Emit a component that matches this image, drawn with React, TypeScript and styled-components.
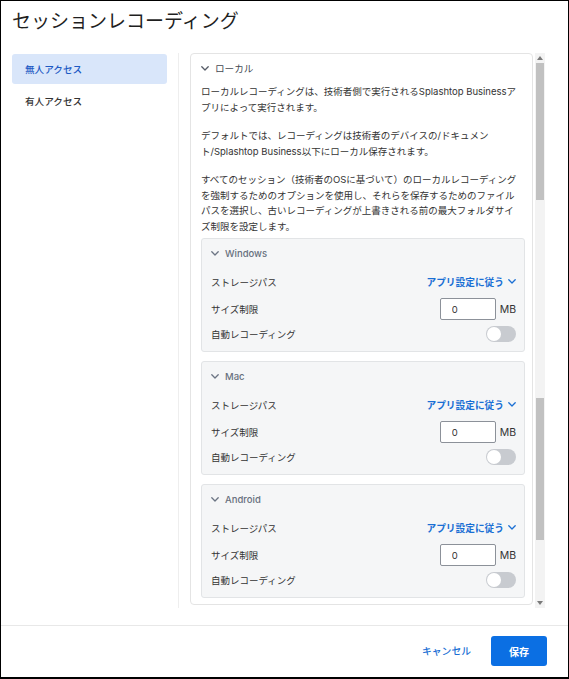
import styled, { createGlobalStyle } from 'styled-components';

const GlobalStyle = createGlobalStyle`
  * { box-sizing: border-box; }
  body {
    margin: 0;
    background: #ffffff;
    font-family: 'Inter', 'Noto Sans CJK JP', sans-serif;
  }
`;

const platforms = ['Windows', 'Mac', 'Android'];

function Chevron({ color = '#6b7280' }: { color?: string }) {
  return (
    <svg width="8" height="5" viewBox="0 0 8 5">
      <polyline
        points="0.8,0.8 4,4 7.2,0.8"
        fill="none"
        stroke={color}
        strokeWidth="1.3"
        strokeLinecap="round"
        strokeLinejoin="round"
      />
    </svg>
  );
}

function Arrow({ up }: { up?: boolean }) {
  return (
    <svg width="6" height="4" viewBox="0 0 6 4">
      <polygon points={up ? '0,4 3,0 6,4' : '0,0 3,4 6,0'} fill="#7a7a7a" />
    </svg>
  );
}

function PlatformCard({ name }: { name: string }) {
  return (
    <SubCard>
      <SubHeader>
        <Chevron color="#6b7483" />
        <span>{name}</span>
      </SubHeader>
      <Row $h={24} $mb={2}>
        <Label>ストレージパス</Label>
        <SelectLink>
          アプリ設定に従う
          <Chevron color="#1a6fd4" />
        </SelectLink>
      </Row>
      <Row $h={28}>
        <Label>サイズ制限</Label>
        <SizeGroup>
          <SizeInput defaultValue="0" />
          <Unit>MB</Unit>
        </SizeGroup>
      </Row>
      <Row $h={22}>
        <Label>自動レコーディング</Label>
        <Toggle>
          <Knob />
        </Toggle>
      </Row>
    </SubCard>
  );
}

export default function App() {
  return (
    <>
      <GlobalStyle />
      <Dialog>
        <Title>セッションレコーディング</Title>
        <Body>
          <Nav>
            <NavItem $active>無人アクセス</NavItem>
            <NavItem>有人アクセス</NavItem>
          </Nav>
          <Divider />
          <ScrollArea>
            <Card>
              <SectionHeader>
                <Chevron color="#555b66" />
                <span>ローカル</span>
              </SectionHeader>
              <Para>
                ローカルレコーディングは、技術者側で実行されるSplashtop Businessア
                <br />
                プリによって実行されます。
              </Para>
              <Para>
                デフォルトでは、レコーディングは技術者のデバイスの/ドキュメン
                <br />
                ト/Splashtop Business以下にローカル保存されます。
              </Para>
              <Para>
                すべてのセッション（技術者のOSに基づいて）のローカルレコーディング
                <br />
                を強制するためのオプションを使用し、それらを保存するためのファイル
                <br />
                パスを選択し、古いレコーディングが上書きされる前の最大フォルダサイ
                <br />
                ズ制限を設定します。
              </Para>
              <CardList>
                {platforms.map((p) => (
                  <PlatformCard key={p} name={p} />
                ))}
              </CardList>
            </Card>
            <ScrollTrack>
              <ArrowBox>
                <Arrow up />
              </ArrowBox>
              <Thumb $h={137} />
              <Thumb $h={142} $mt={198} />
              <TrackFill />
              <ArrowBox>
                <Arrow />
              </ArrowBox>
            </ScrollTrack>
          </ScrollArea>
        </Body>
        <Footer>
          <CancelButton>キャンセル</CancelButton>
          <SaveButton>保存</SaveButton>
        </Footer>
      </Dialog>
    </>
  );
}

const Dialog = styled.div`
  width: 569px;
  height: 679px;
  border: 1px solid #000000;
  border-bottom-width: 2px;
  background: #ffffff;
  display: flex;
  flex-direction: column;
  overflow: hidden;
`;

const Title = styled.h1`
  margin: 0;
  padding: 9px 11px 19px;
  font-size: 19px;
  line-height: 24px;
  font-weight: 400;
  color: #1f1f1f;
  white-space: nowrap;
`;

const Body = styled.div`
  display: flex;
  height: 555px;
  padding-left: 11px;
  margin-bottom: 17px;
`;

const Nav = styled.nav`
  width: 155px;
  display: flex;
  flex-direction: column;
  gap: 2px;
  padding-top: 1px;
`;

const NavItem = styled.div<{ $active?: boolean }>`
  height: 30px;
  display: flex;
  align-items: center;
  padding-left: 13px;
  border-radius: 3px;
  font-size: 9.6px;
  font-weight: 500;
  color: ${(p) => (p.$active ? '#1d5ac4' : '#333333')};
  background: ${(p) => (p.$active ? '#d9e6fa' : 'transparent')};
`;

const Divider = styled.div`
  width: 1px;
  background: #eeeeee;
  margin: 0 11px;
`;

const ScrollArea = styled.div`
  display: flex;
  gap: 2px;
  height: 100%;
`;

const Card = styled.section`
  width: 343px;
  height: 552px;
  border: 1px solid #e4e4e4;
  border-radius: 4px;
  padding: 6px 7px 6px 10px;
  overflow: hidden;
`;

const SectionHeader = styled.div`
  height: 16px;
  display: flex;
  align-items: center;
  gap: 6px;
  font-size: 9.6px;
  color: #444a52;
  margin-bottom: 8px;
`;

const Para = styled.p`
  margin: 0 0 13px;
  font-size: 9.5px;
  line-height: 15.5px;
  color: #333333;
  white-space: nowrap;
  &:last-of-type {
    margin-bottom: 4px;
  }
`;

const CardList = styled.div`
  display: flex;
  flex-direction: column;
  gap: 9px;
`;

const SubCard = styled.div`
  height: 114px;
  background: #f5f6f7;
  border: 1px solid #e2e4e6;
  border-radius: 3px;
  padding: 7px 8px 6px 9px;
  display: flex;
  flex-direction: column;
`;

const SubHeader = styled.div`
  height: 16px;
  display: flex;
  align-items: center;
  gap: 6px;
  font-size: 9.5px;
  font-weight: 500;
  color: #67707d;
  margin-bottom: 8px;
`;

const Row = styled.div<{ $h: number; $mb?: number }>`
  height: ${(p) => p.$h}px;
  margin-bottom: ${(p) => p.$mb ?? 0}px;
  display: flex;
  align-items: center;
  justify-content: space-between;
`;

const Label = styled.span`
  font-size: 9.5px;
  color: #333333;
`;

const SelectLink = styled.span`
  display: flex;
  align-items: center;
  gap: 4px;
  font-size: 9.7px;
  font-weight: 600;
  color: #1a6fd4;
`;

const SizeGroup = styled.div`
  display: flex;
  align-items: center;
  gap: 4px;
`;

const SizeInput = styled.input`
  width: 56px;
  height: 22px;
  border: 1px solid #8c9199;
  border-radius: 2px;
  padding: 0 0 0 11px;
  font-family: inherit;
  font-size: 9.5px;
  color: #333333;
  background: #ffffff;
  outline: none;
`;

const Unit = styled.span`
  font-size: 10.5px;
  color: #333333;
`;

const Toggle = styled.div`
  width: 30px;
  height: 16px;
  border-radius: 8px;
  background: #c8cbd0;
  padding: 1px;
  display: flex;
  align-items: center;
`;

const Knob = styled.div`
  width: 14px;
  height: 14px;
  border-radius: 50%;
  background: #ffffff;
`;

const ScrollTrack = styled.div`
  width: 10px;
  height: 555px;
  background: #f3f3f3;
  display: flex;
  flex-direction: column;
  align-items: center;
`;

const ArrowBox = styled.div`
  height: 10px;
  width: 100%;
  display: flex;
  align-items: center;
  justify-content: center;
`;

const Thumb = styled.div<{ $h: number; $mt?: number }>`
  width: 8px;
  height: ${(p) => p.$h}px;
  margin-top: ${(p) => p.$mt ?? 0}px;
  background: #c1c1c1;
`;

const TrackFill = styled.div`
  flex: 1;
`;

const Footer = styled.footer`
  flex: 1;
  border-top: 1px solid #e8e8e8;
  display: flex;
  justify-content: flex-end;
  align-items: flex-start;
  padding: 10px 21px 0 0;
  gap: 14px;
`;

const CancelButton = styled.button`
  height: 30px;
  padding: 0 6px;
  border: none;
  background: transparent;
  font-family: inherit;
  font-size: 9.8px;
  font-weight: 500;
  color: #1a6fd4;
`;

const SaveButton = styled.button`
  width: 56px;
  height: 30px;
  border: none;
  border-radius: 3px;
  background: #0b6fe3;
  font-family: inherit;
  font-size: 10px;
  font-weight: 700;
  color: #ffffff;
`;
